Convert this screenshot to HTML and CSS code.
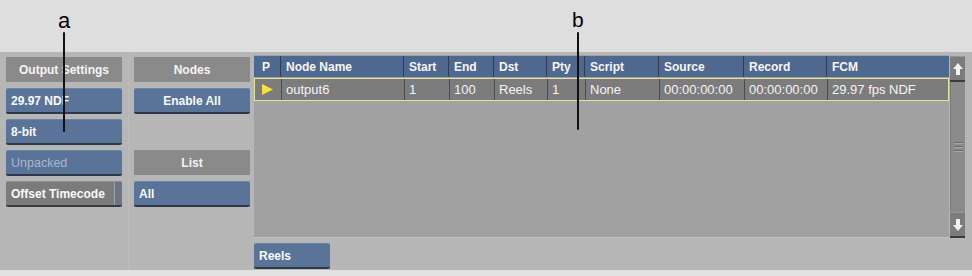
FILE: index.html
```html
<!DOCTYPE html>
<html>
<head>
<meta charset="utf-8">
<link rel="stylesheet" href="styles.css">
</head>
<body>
<div class="top"></div>
<div class="panel">
  <div class="col">
    <div class="label">Output Settings</div>
    <div class="btn">29.97 NDF</div>
    <div class="btn">8-bit</div>
    <div class="btn disabled">Unpacked</div>
    <div class="btn toggle"><span>Offset Timecode</span><i class="ind"></i></div>
  </div>
  <div class="sep"></div>
  <div class="col">
    <div class="label">Nodes</div>
    <div class="btn center">Enable All</div>
    <div class="empty"></div>
    <div class="label">List</div>
    <div class="btn">All</div>
  </div>
  <div class="right">
    <div class="tablewrap">
      <div class="table">
        <div class="row head">
          <div class="c">P</div><div class="c">Node Name</div><div class="c">Start</div><div class="c">End</div><div class="c">Dst</div><div class="c">Pty</div><div class="c">Script</div><div class="c">Source</div><div class="c">Record</div><div class="c">FCM</div>
        </div>
        <div class="row data">
          <div class="c play"><svg width="13" height="13" viewBox="0 0 13 13"><polygon points="1,1 12,6.5 1,12" fill="#f3e33c"/></svg></div><div class="c">output6</div><div class="c">1</div><div class="c">100</div><div class="c">Reels</div><div class="c">1</div><div class="c">None</div><div class="c">00:00:00:00</div><div class="c">00:00:00:00</div><div class="c">29.97 fps NDF</div>
        </div>
      </div>
      <div class="scroll">
        <div class="sbtn"><svg width="10" height="12" viewBox="0 0 10 12"><polygon points="5,0 10,6 7,6 7,12 3,12 3,6 0,6" fill="#f0f0f0"/></svg></div>
        <div class="track"><div class="grip"><i></i><i></i><i></i></div></div>
        <div class="sbtn"><svg width="10" height="12" viewBox="0 0 10 12"><polygon points="5,12 10,6 7,6 7,0 3,0 3,6 0,6" fill="#f0f0f0"/></svg></div>
      </div>
    </div>
    <div class="bottom">
      <div class="btn reels">Reels</div>
    </div>
  </div>
</div>
<div class="foot"></div>
<div class="anno anno-a"><span>a</span><i class="stem"></i></div>
<div class="anno anno-b"><span>b</span><i class="stem"></i></div>
</body>
</html>
```
FILE: styles.css
```css
* { box-sizing: border-box; }
html, body { margin: 0; padding: 0; }
body {
  width: 972px;
  height: 276px;
  background: #dedede;
  font-family: "Liberation Sans", Arial, sans-serif;
  position: relative;
  overflow: hidden;
}
.top { height: 52px; background: #dedede; }
.foot { height: 6px; background: #e2e2e2; }
.panel {
  height: 218px;
  background: #b6b6b6;
  display: flex;
  padding-left: 6px;
}
.col {
  width: 116px;
  padding-top: 5px;
  display: grid;
  grid-template-rows: repeat(5, 26px);
  row-gap: 5px;
  align-content: start;
}
.sep {
  width: 12px;
  display: flex;
  justify-content: center;
}
.sep::before {
  content: "";
  width: 1px;
  background: #bcbcbc;
}
.label {
  height: 25px;
  background: #8a8a8a;
  color: #f4f4f4;
  font-weight: bold;
  font-size: 12px;
  display: flex;
  align-items: center;
  justify-content: center;
}
.btn {
  height: 26px;
  background: #597399;
  border-radius: 2px;
  border-bottom: 2px solid #2f3846;
  border-top: 1px solid #6a84a8;
  color: #fafafa;
  font-weight: bold;
  font-size: 12px;
  display: flex;
  align-items: center;
  padding-left: 5px;
}
.btn.center { justify-content: center; padding-left: 0; }
.btn.disabled { color: #a9b8cc; font-weight: normal; font-size: 12.5px; }
.btn.toggle {
  background: #7b7b7b;
  border-top-color: #8c8c8c;
  border-bottom-color: #3a3a3a;
  padding-right: 0;
  justify-content: space-between;
  align-items: stretch;
}
.btn.toggle span { display: flex; align-items: center; }
.btn.toggle .ind {
  width: 8px;
  background: #6c7482;
  border-left: 1px solid #9aa3b0;
}
.right {
  margin-left: 4px;
  padding-top: 3px;
  display: flex;
  flex-direction: column;
  width: 712px;
}
.tablewrap {
  height: 183px;
  display: flex;
}
.table {
  width: 695px;
  background: #a1a1a1;
  padding-top: 1px;
  border-bottom: 1px solid #c0c0c0;
}
.row {
  display: grid;
  grid-template-columns: 26px 123px 45px 45px 53px 38px 74px 85px 83px 1fr;
}
.row .c {
  display: flex;
  align-items: center;
  padding-left: 5px;
  white-space: nowrap;
}
.head {
  height: 21px;
  background: #4f6890;
  color: #f6f6f6;
  font-weight: bold;
  font-size: 12px;
}
.head .c { border-left: 1px solid #2f3c52; }
.head .c:first-child { border-left: none; padding-left: 8px; }
.data {
  margin-top: 1px;
  height: 23px;
  background: #7c7c7c;
  color: #f4f4f4;
  font-size: 13px;
  border: 1px solid #e3e3a0;
}
.data .c { border-left: 1px solid #4c4c4c; padding-left: 4px; }
.data .c:first-child { border-left: none; padding-left: 6px; }
.scroll {
  width: 15px;
  margin-left: 1px;
  display: flex;
  flex-direction: column;
  padding-top: 1px;
}
.sbtn {
  height: 26px;
  background: #7c7c7c;
  border-bottom: 2px solid #3c3c3c;
  border-top: 1px solid #959595;
  display: flex;
  align-items: center;
  justify-content: center;
}
.track {
  flex: 1;
  background: #8b8b8b;
  border-left: 1px solid #7a7a7a;
  display: flex;
  align-items: center;
  justify-content: center;
}
.grip { display: flex; flex-direction: column; gap: 2px; }
.grip i { display: block; width: 9px; height: 2px; background: #6a6a6a; border-bottom: 1px solid #a8a8a8; }
.bottom {
  padding-top: 5px;
  display: flex;
}
.reels { width: 76px; }
.anno {
  position: absolute;
  display: flex;
  flex-direction: column;
  align-items: center;
  color: #000;
  font-family: "Liberation Sans", Arial, sans-serif;
}
.anno span { line-height: 1; }
.anno .stem { display: block; width: 2px; background: #111; border-radius: 1px; }
.anno-a { left: 58px; top: 10px; font-size: 22px; }
.anno-a .stem { height: 100px; }
.anno-b { left: 572px; top: 9px; font-size: 21px; }
.anno-b .stem { height: 98px; margin-top: 2px; }
```
